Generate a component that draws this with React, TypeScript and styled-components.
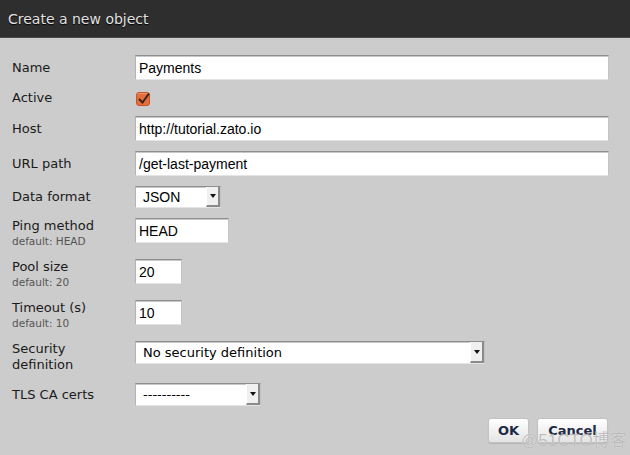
import React from "react";
import styled, { createGlobalStyle } from "styled-components";

const GlobalStyle = createGlobalStyle`
	html, body {
		margin: 0;
		padding: 0;
		background: #cccccc;
	}
	body {
		font-family: "DejaVu Sans", Verdana, sans-serif;
	}
`;

export const Dialog = styled.div`
	position: relative;
	width: 630px;
	height: 455px;
	background: #cccccc;
	overflow: hidden;
`;

export const DialogHeader = styled.div`
	height: 37px;
	display: flex;
	align-items: center;
	padding-left: 8px;
	background: #2e2e2e;
	border-bottom: 1px solid #4a4a4a;
	color: #e2e2e2;
	font-size: 14px;
	text-shadow: 0 1px 1px #000;
`;

export const DialogBody = styled.div`
	padding: 17px 21px 0 12px;
`;

export const FormGrid = styled.div`
	display: grid;
	grid-template-columns: 123px 1fr;
	row-gap: 10px;
	align-items: start;
`;

export const Label = styled.div<{ $line: number }>`
	font-size: 13px;
	line-height: ${(p) => p.$line}px;
	color: #1a1a1a;
`;

export const SubLabel = styled.div`
	font-size: 10.5px;
	line-height: 15px;
	color: #555555;
`;

export const TextInput = styled.input<{ $width: number }>`
	box-sizing: border-box;
	width: ${(p) => p.$width}px;
	height: 25px;
	margin: 0;
	padding: 0 3px;
	border: 1px solid;
	border-color: #8e8e8e #c4c4c4 #e4e4e4 #b4b4b4;
	box-shadow: inset 0 1px 0 #c8c8c8;
	background: #ffffff;
	font-family: "Liberation Sans", Arial, sans-serif;
	font-size: 14px;
	color: #000000;
	outline: none;
`;

export const CheckBox = styled.span`
	box-sizing: border-box;
	display: flex;
	align-items: center;
	justify-content: center;
	width: 14px;
	height: 14px;
	margin: 2px 0 0 1px;
	border-radius: 3px;
	background: #e56f3c;
	border: 1px solid #c4552a;
	box-shadow: inset 0 1px 0 #f09468;
`;

export const Select = styled.div<{ $width: number; $height: number }>`
	box-sizing: border-box;
	display: flex;
	align-items: stretch;
	width: ${(p) => p.$width}px;
	height: ${(p) => p.$height}px;
	background: #ffffff;
	border: 1px solid;
	border-color: #8e8e8e #c4c4c4 #e4e4e4 #b4b4b4;
	box-shadow: inset 0 1px 0 #c8c8c8;
`;

export const SelectValue = styled.div<{ $mono?: boolean }>`
	flex: 1;
	display: flex;
	align-items: center;
	padding-left: 7px;
	font-family: ${(p) =>
		p.$mono ? '"Liberation Sans", Arial, sans-serif' : '"DejaVu Sans", Verdana, sans-serif'};
	font-size: ${(p) => (p.$mono ? 14 : 13)}px;
	color: #000000;
`;

export const SelectArrow = styled.div`
	box-sizing: border-box;
	width: 14px;
	display: flex;
	align-items: center;
	justify-content: center;
	background: #f0f0f0;
	border-left: 1px solid #ffffff;
	border-right: 2px solid #8a8a8a;
	border-bottom: 2px solid #8a8a8a;
	&::after {
		content: "";
		width: 0;
		height: 0;
		border-left: 3px solid transparent;
		border-right: 3px solid transparent;
		border-top: 4px solid #111111;
	}
`;

export const ButtonBar = styled.div`
	display: flex;
	justify-content: flex-end;
	gap: 8px;
	margin-top: 12px;
	padding-right: 1px;
`;

export const Button = styled.button<{ $width: number }>`
	box-sizing: border-box;
	width: ${(p) => p.$width}px;
	height: 25px;
	padding: 0;
	border: 1px solid #c2c2c2;
	border-radius: 3px;
	background: linear-gradient(#ffffff, #e4e4e4);
	box-shadow: 0 1px 1px rgba(0, 0, 0, 0.12);
	font-family: "DejaVu Sans", Verdana, sans-serif;
	font-size: 13px;
	font-weight: bold;
	color: #1d2a45;
`;

export const Watermark = styled.div`
	position: absolute;
	left: 521px;
	top: 426px;
	font-family: "Liberation Sans", "Noto Sans CJK SC", sans-serif;
	font-size: 17px;
	color: rgba(170, 170, 170, 0.75);
	text-shadow: 0 0 1px rgba(255, 255, 255, 0.8);
	pointer-events: none;
`;

const Check = () => (
	<svg width="13" height="12" viewBox="0 0 13 12" style={{ overflow: "visible" }}>
		<path d="M2 6 L5.5 9.5 L12 0.5" fill="none" stroke="#3a2318" strokeWidth="2" />
	</svg>
);

const Field = ({ title, hint }: { title: string; hint: string }) => (
	<div>
		<Label $line={16}>{title}</Label>
		<SubLabel>{hint}</SubLabel>
	</div>
);

export default function App() {
	return (
		<Dialog>
			<GlobalStyle />
			<DialogHeader>Create a new object</DialogHeader>
			<DialogBody>
				<FormGrid>
					<Label $line={25}>Name</Label>
					<TextInput $width={474} defaultValue="Payments" />

					<Label $line={15}>Active</Label>
					<CheckBox>
						<Check />
					</CheckBox>

					<Label $line={25}>Host</Label>
					<TextInput $width={474} defaultValue="http://tutorial.zato.io" />

					<Label $line={25}>URL path</Label>
					<TextInput $width={474} defaultValue="/get-last-payment" />

					<Label $line={22}>Data format</Label>
					<Select $width={86} $height={22}>
						<SelectValue $mono>JSON</SelectValue>
						<SelectArrow />
					</Select>

					<Field title="Ping method" hint="default: HEAD" />
					<TextInput $width={94} defaultValue="HEAD" />

					<Field title="Pool size" hint="default: 20" />
					<TextInput $width={47} defaultValue="20" />

					<Field title="Timeout (s)" hint="default: 10" />
					<TextInput $width={47} defaultValue="10" />

					<Label $line={16}>
						Security
						<br />
						definition
					</Label>
					<Select $width={350} $height={23}>
						<SelectValue>No security definition</SelectValue>
						<SelectArrow />
					</Select>

					<Label $line={23}>TLS CA certs</Label>
					<Select $width={126} $height={23}>
						<SelectValue>----------</SelectValue>
						<SelectArrow />
					</Select>
				</FormGrid>
				<ButtonBar>
					<Button $width={41}>OK</Button>
					<Button $width={71}>Cancel</Button>
				</ButtonBar>
			</DialogBody>
			<Watermark>@51CTO博客</Watermark>
		</Dialog>
	);
}
